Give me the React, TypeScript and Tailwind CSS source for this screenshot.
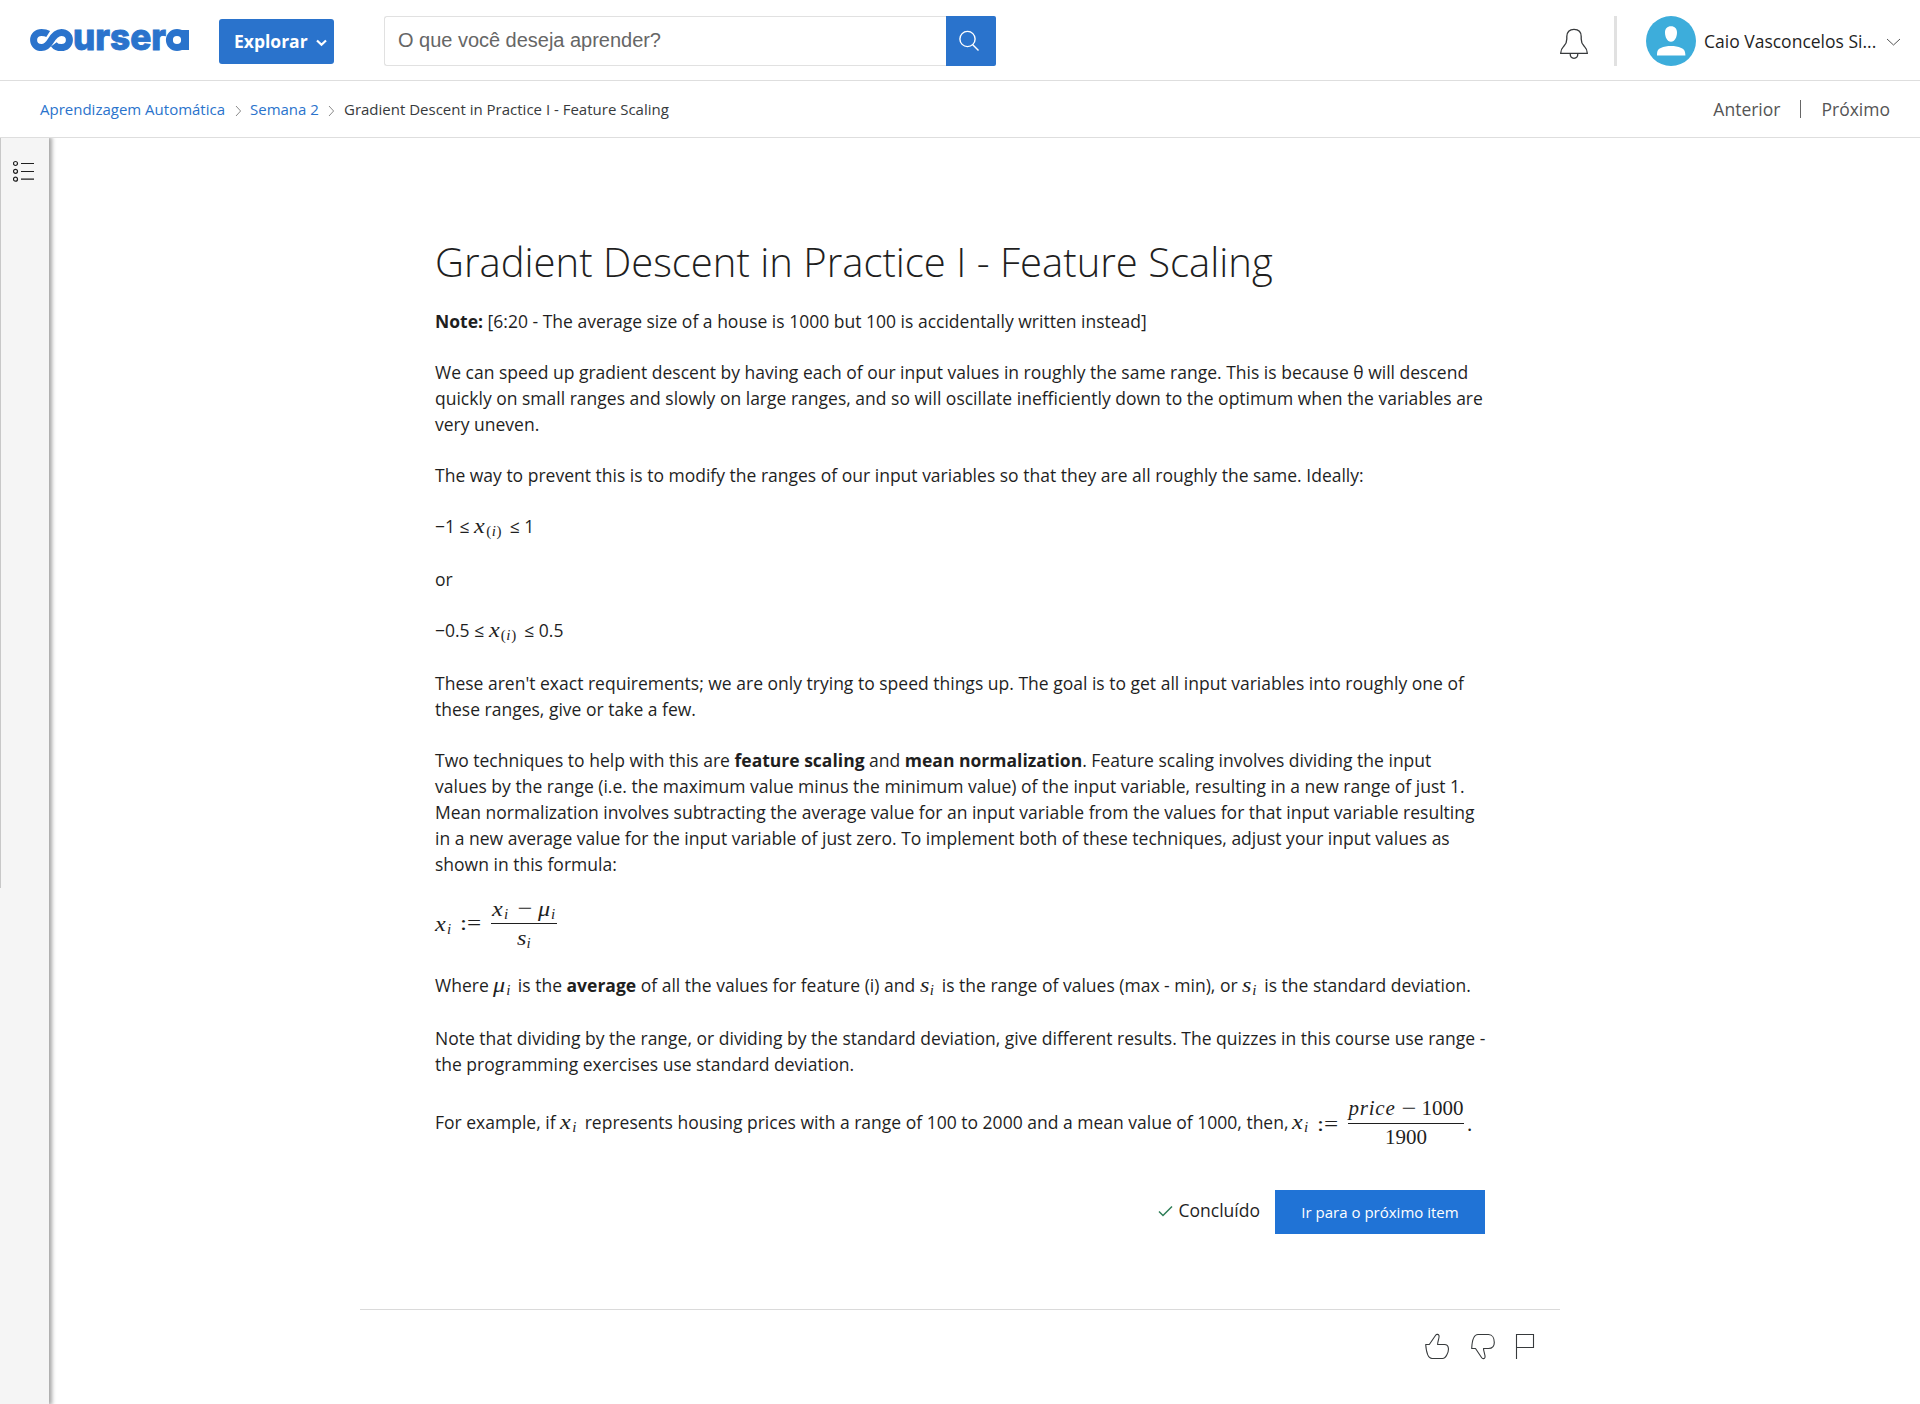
import type { ReactNode } from 'react';

const MATH = "font-['Liberation_Serif',serif] text-[21px] leading-none";

/* A variable with its subscript, on the text baseline. */
function Sym({ v, sub, w, vw = 'w-3' }: { v: string; sub: ReactNode; w: string; vw?: string }) {
  return (
    <span className={`${MATH} inline-flex items-baseline whitespace-nowrap italic h-5 ${w}`}>
      <span className={`inline-block ${vw}`}>
        <span className="inline-block origin-left scale-x-[1.15]">{v}</span>
      </span>
      <span className="relative top-[3px] text-[15px] tracking-[0.6px]">{sub}</span>
    </span>
  );
}

/* Index in upright parentheses. */
function Idx() {
  return <><span className="not-italic">(</span>i<span className="not-italic">)</span></>;
}

function Minus({ w }: { w: string }) {
  return (
    <span className={`flex justify-center ${w}`}>
      <span className="inline-block scale-x-[1.25]">−</span>
    </span>
  );
}

function Frac({ top, bottom, w }: { top: ReactNode; bottom: ReactNode; w: string }) {
  return (
    <span className={`${MATH} flex flex-col items-center ${w}`}>
      <span className="flex h-[27px] w-full items-center justify-center whitespace-nowrap border-b border-[#1f1f1f] pb-[3px]">{top}</span>
      <span className="flex h-[27px] items-center justify-center">{bottom}</span>
    </span>
  );
}

function Assign({ w = 'w-[31px]' }: { w?: string }) {
  return <span className={`${MATH} inline-block whitespace-nowrap ${w}`}><span className="inline-block origin-left scale-x-[1.2]">:=</span></span>;
}

function Crumb() {
  return (
    <svg width="7" height="12" viewBox="0 0 7 12" fill="none" stroke="#8a8a8a" className="mt-1">
      <path d="M1 1l4.6 5L1 11" />
    </svg>
  );
}

export default function App() {
  return (
    <div className="flex h-[1404px] w-[1920px] flex-col overflow-hidden bg-white font-['Open_Sans',sans-serif] text-[17.5px] leading-[26px] text-[#1f1f1f]">
      <header className="flex h-[81px] shrink-0 items-start border-b border-[#dedede]">
        <svg className="ml-[30px] mt-[10px] shrink-0 overflow-visible" width="160" height="60" viewBox="0 -10 160 60" role="img" aria-label="coursera">
          <g fill="none" stroke="#2a73cc" strokeWidth="7">
            <path d="M18.200 14C16.500 12.900 14 12.400 11.500 12.400C7 12.400 3.600 15.700 3.600 20C3.600 24.300 7 27.600 11.500 27.600C16 27.600 18.200 25.200 20.800 20.800C23.800 15.500 26.500 12.400 31.300 12.400C36 12.400 39.400 15.700 39.400 20C39.400 24.300 36 27.600 31.300 27.600C27.800 27.600 25.200 26.200 23.800 24.300" />
            <circle cx="147" cy="20" r="7.600" />
          </g>
          <path d="M151.500 10H159V30H151.500Z" fill="#2a73cc" />
          <text
            x="43"
            y="30"
            textLength="93"
            lengthAdjust="spacingAndGlyphs"
            fill="#2a73cc"
            stroke="#2a73cc"
            strokeWidth="0.900"
            className="font-['Inter',sans-serif] text-[37px] font-extrabold"
          >
            urser
          </text>
        </svg>
        <button className="ml-[29px] mt-[19px] flex h-[45px] w-[115px] items-center rounded-[3px] bg-[#2a73cc] pb-px pl-[15px] text-[17.5px] font-bold text-white">
          Explorar
          <svg className="ml-2 mt-[3px]" width="11" height="8" viewBox="0 0 11 8" fill="none" stroke="white" strokeWidth="2.200">
            <path d="M1 1.500l4.500 4.300L10 1.500" />
          </svg>
        </button>
        <div className="ml-[50px] mt-4 flex h-[50px] w-[612px]">
          <div className="flex flex-1 items-center rounded-l-[3px] border border-r-0 border-[#e1e1e1] pb-[2px] pl-[13px] font-['Liberation_Sans',sans-serif] text-[20px] tracking-[-0.02px] text-[#666]">
            O que você deseja aprender?
          </div>
          <div className="flex w-[50px] items-center justify-center rounded-r-[2px] bg-[#2a73cc]">
            <svg className="mr-[5px]" width="22" height="22" viewBox="0 0 22 22" fill="none" stroke="white" strokeWidth="1.400">
              <circle cx="9.500" cy="9" r="7.600" />
              <path d="M14.500 14.500l6 6" />
            </svg>
          </div>
        </div>
        <svg className="ml-[564px] mt-[28px] shrink-0" width="28" height="32" viewBox="0 0 28 32" fill="none" stroke="#373a3c" strokeWidth="1.300">
          <path d="M.7 25.300C.7 21 2 20 4 18C6 16 6.800 14.500 6.800 11V8.500C6.800 4 9.500 1.300 14 1.300S21.200 4 21.200 8.500V11C21.200 14.500 22 16 24 18C26 20 27.300 21 27.300 25.300Z" />
          <path d="M10.200 25.800C10.200 28.500 11.700 30.300 14 30.300S17.800 28.500 17.800 25.800" />
        </svg>
        <div className="ml-[26px] mt-4 h-[50px] w-[3px] bg-[#e1e1e1]" />
        <svg className="ml-[29px] mt-4 shrink-0" width="50" height="50" viewBox="0 0 50 50">
          <circle cx="25" cy="25" r="25" fill="#3daddb" />
          <path d="M25 10.300c3.800 0 6 2.500 6 6.200 0 4.500-2.200 9.200-6 9.200s-6-4.700-6-9.200c0-3.700 2.200-6.200 6-6.200zM11 39.500c0-4.300.8-6.500 3.800-7.600 6-2.500 14.400-2.500 20.400 0 3 1.100 4.200 3.300 4.200 7.600z" fill="white" />
        </svg>
        <div className="ml-2 mt-[28px] w-[182px] shrink-0 whitespace-nowrap">Caio Vasconcelos Si...</div>
        <svg className="mt-[38px] shrink-0" width="15" height="9" viewBox="0 0 15 9" fill="none" stroke="#555">
          <path d="M1 1l6.500 6L14 1" />
        </svg>
      </header>

      <nav className="flex h-[57px] shrink-0 items-center border-b border-[#dedede] pl-10 text-[15px]">
        <span className="w-[185px] whitespace-nowrap text-[#2a73cc]">Aprendizagem Automática</span>
        <span className="ml-[10px] flex w-[15px]"><Crumb /></span>
        <span className="w-[69px] whitespace-nowrap text-[#2a73cc]">Semana 2</span>
        <span className="ml-[9px] flex w-4"><Crumb /></span>
        <span className="whitespace-nowrap text-[#373a3c]">Gradient Descent in Practice I - Feature Scaling</span>
        <div className="ml-auto mr-[30px] flex items-center text-[17.5px] text-[#555]">
          <span>Anterior</span>
          <span className="ml-5 mr-5 h-[18px] w-px bg-[#666]" />
          <span>Próximo</span>
        </div>
      </nav>

      <div className="flex min-h-0 flex-1">
        <aside className="flex w-[49px] shrink-0 bg-[#f5f5f5] shadow-[2px_0_4px_1px_rgba(0,0,0,0.35)] [clip-path:inset(0_-10px_0_0)]">
          <div className="h-[750px] w-px bg-[#c8c8c8]" />
          <svg className="ml-3 mt-[22px]" width="22" height="22" viewBox="0 0 22 22" fill="none" stroke="#1f1f1f" strokeWidth="1.200">
            <circle cx="2.500" cy="3.500" r="2" />
            <circle cx="2.500" cy="11.300" r="2" />
            <circle cx="2.500" cy="19.200" r="2" />
            <path d="M8 3.500h13M8 11.500h13M8 19.200h13" />
          </svg>
        </aside>

        <main className="ml-[311px] w-[1200px]">
          <article className="ml-[75px] w-[1054px] pt-[95px] tracking-[0.005px]">
            <h1 className="h-[75px] whitespace-nowrap text-[40px] font-light leading-[57px]">Gradient Descent in Practice I - Feature Scaling</h1>
            <p><b>Note:</b> [6:20 - The average size of a house is 1000 but 100 is accidentally written instead]</p>
            <p className="mt-[25px]">
              We can speed up gradient descent by having each of our input values in roughly the same range. This is because θ will descend<br />
              quickly on small ranges and slowly on large ranges, and so will oscillate inefficiently down to the optimum when the variables are<br />
              very uneven.
            </p>
            <p className="mt-[25px]">The way to prevent this is to modify the ranges of our input variables so that they are all roughly the same. Ideally:</p>
            <p className="mt-[25px] h-7">−1 ≤ <Sym v="x" sub={<Idx />} w="w-[31px]" /> ≤ 1</p>
            <p className="mt-[25px]">or</p>
            <p className="mt-[25px] h-7">−0.5 ≤ <Sym v="x" sub={<Idx />} w="w-[31px]" /> ≤ 0.5</p>
            <p className="mt-[25px]">
              These aren't exact requirements; we are only trying to speed things up. The goal is to get all input variables into roughly one of<br />
              these ranges, give or take a few.
            </p>
            <p className="mt-[25px]">
              Two techniques to help with this are <b>feature scaling</b> and <b>mean normalization</b>. Feature scaling involves dividing the input<br />
              values by the range (i.e. the maximum value minus the minimum value) of the input variable, resulting in a new range of just 1.<br />
              Mean normalization involves subtracting the average value for an input variable from the values for that input variable resulting<br />
              in a new average value for the input variable of just zero. To implement both of these techniques, adjust your input values as<br />
              shown in this formula:
            </p>
            <div className="mt-5 flex h-[54px] items-center">
              <span className="flex items-center pb-px">
                <Sym v="x" sub="i" w="w-[25px]" />
                <Assign />
              </span>
              <Frac
                w="w-[66px]"
                top={<><Sym v="x" sub="i" w="w-[24px]" /><Minus w="w-[18px]" /><span className="w-1" /><Sym v="μ" sub="i" w="w-[18px]" vw="w-[13px]" /></>}
                bottom={<Sym v="s" sub="i" w="w-[15px]" vw="w-[10px]" />}
              />
            </div>
            <p className="mt-[21px] h-7 whitespace-nowrap">
              Where <Sym v="μ" sub="i" w="w-[20px]" vw="w-[13px]" /> is the <b>average</b> of all the values for feature (i) and <Sym v="s" sub="i" w="w-[17.500px]" vw="w-[10px]" /> is the range of values (max - min), or <Sym v="s" sub="i" w="w-[17.500px]" vw="w-[10px]" /> is the standard deviation.
            </p>
            <p className="mt-[25px] whitespace-nowrap">
              Note that dividing by the range, or dividing by the standard deviation, give different results. The quizzes in this course use range -<br />
              the programming exercises use standard deviation.
            </p>
            <div className="mt-5 flex h-[54px] items-center whitespace-nowrap">
              <span className="pb-1">For example, if <Sym v="x" sub="i" w="w-[20px]" /> represents housing prices with a range of 100 to 2000 and a mean value of 1000, then, <span className="-ml-px"><Sym v="x" sub="i" w="w-[25px]" /></span></span>
              <Assign />
              <Frac
                w="w-[116px]"
                top={<><i className="tracking-[0.800px]">price</i><Minus w="w-[26px]" />1000</>}
                bottom="1900"
              />
              <span className={`${MATH} ml-[3px]`}>.</span>
            </div>
            <div className="mt-[39px] flex h-[44px] w-[1050px] items-center justify-end">
              <svg className="mr-[5px]" width="15" height="12" viewBox="0 0 15 12" fill="none" stroke="#2e7d57" strokeWidth="1.500">
                <path d="M1 5.500l4 4L14 .5" />
              </svg>
              <span className="mb-1">Concluído</span>
              <button className="ml-[15px] h-[44px] w-[210px] bg-[#2073d6] text-[15px] text-white">Ir para o próximo item</button>
            </div>
          </article>
          <footer className="mt-[75px] flex border-t border-[#dadada] pl-[1065px] pt-[23px] text-[#373a3c]">
            <svg width="24" height="27" viewBox="0 0 24 27" fill="none" stroke="currentColor" strokeWidth="1.100" strokeLinejoin="round">
              <path d="M.7 11.500H4.300L10.800 2C11.700.9 13.600 1.300 14 2.700C14.500 5 12.600 8 12.600 11.500H19.500C24.500 11.500 24 18 22 21.500C20.800 24 19.500 25.500 17.500 25.500H7C4 25.500 1.500 22 .7 11.500Z" />
            </svg>
            <svg className="ml-[22px]" width="24" height="27" viewBox="0 0 24 27" fill="none" stroke="currentColor" strokeWidth="1.100" strokeLinejoin="round">
              <path d="M.7 15.500C1.200 4.500 3.500 1.500 7 1.500H17.500C21.500 1.500 23.300 5.500 23.300 9.500C23.300 14 21 15.500 17.500 15.500H12.500C12.500 18.500 14.500 22 14 24.300C13.500 26 11.500 26 10.700 24.800L4.500 15.500Z" />
            </svg>
            <svg className="ml-5" width="20" height="27" viewBox="0 0 20 27" fill="none" stroke="currentColor" strokeWidth="1.100">
              <path d="M1.500 26V1.500H18.500V14.500H1.500" />
            </svg>
          </footer>
        </main>
      </div>
    </div>
  );
}
